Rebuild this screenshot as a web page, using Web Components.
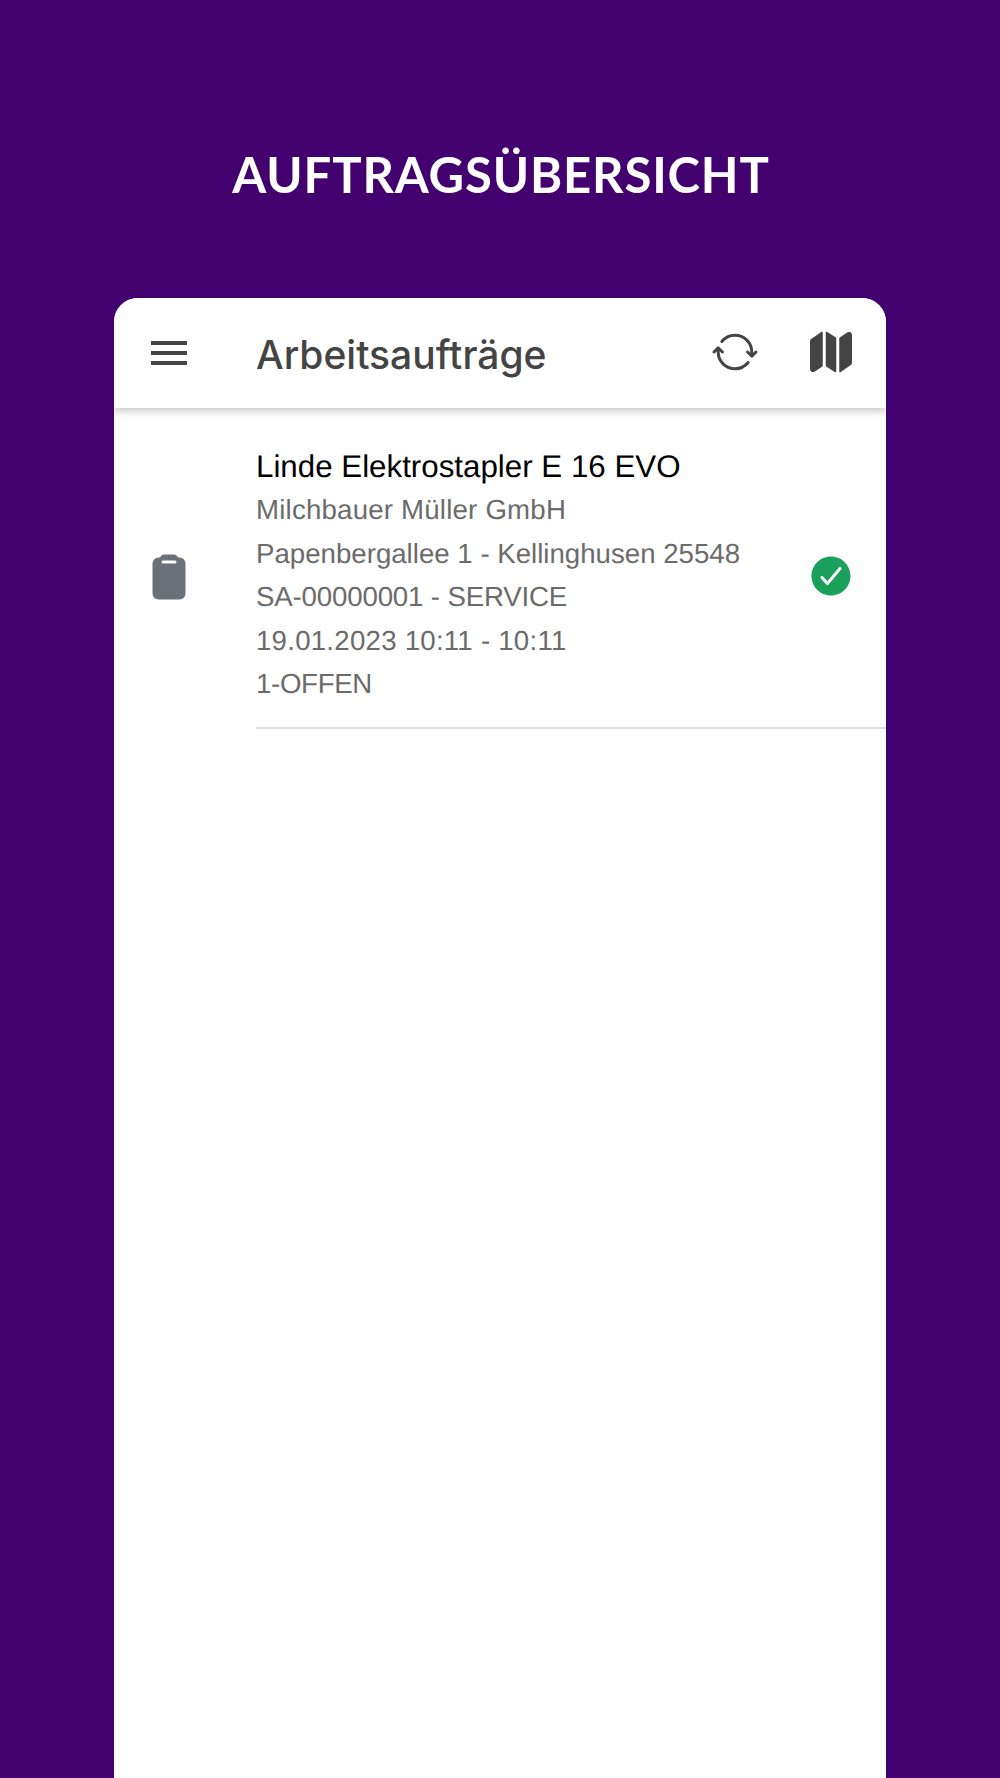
<!DOCTYPE html>
<html lang="de">
<head>
<meta charset="utf-8">
<title>Auftragsübersicht</title>
<style>
  html, body { margin: 0; height: 100%; background: #43006f; }
</style>
</head>
<body>
<order-screen heading="AUFTRAGSÜBERSICHT">
  <order-toolbar title="Arbeitsaufträge"></order-toolbar>
  <order-item
    title="Linde Elektrostapler E 16 EVO"
    lines="Milchbauer Müller GmbH|Papenbergallee 1 - Kellinghusen 25548|SA-00000001 - SERVICE|19.01.2023 10:11 - 10:11|1-OFFEN"
    tracking="0.2|0|-0.16|0.24|-0.32"></order-item>
</order-screen>

<script>
const ICONS = {
  menu: '<path d="M64 384h384v-42.67H64zm0-106.67h384v-42.66H64zM64 128v42.67h384V128z"/>',
  sync: '<g fill="none" stroke="currentColor" stroke-width="32" stroke-linecap="round" stroke-linejoin="round"><path d="M434.67 285.59v-29.8c0-98.73-80.24-178.79-179.2-178.79a179 179 0 00-140.14 67.36m-38.53 82v29.8C76.8 355 157 435 256 435a180.45 180.45 0 00140-66.92"/><path d="M32 256l44-44 46 44"/><path d="M480 256l-44 44-46-44"/></g>',
  map: '<path d="M48.17 113.34A32 32 0 0032 141.24V438a32 32 0 0047 28.37c.43-.23.85-.47 1.26-.74l84.14-55.05a8 8 0 003.63-6.72V46.24a8 8 0 00-12.51-6.63zM212.36 39.31A8 8 0 00200 46v357a8 8 0 003.64 6.72l96 62.11A8 8 0 00312 465V108a8 8 0 00-3.64-6.72zM464.53 46.47a31.64 31.64 0 00-31.5-.88 12.07 12.07 0 00-1.25.74l-84.15 55a8 8 0 00-3.63 6.72V465a8 8 0 0012.52 6.63l107.07-73.46a32 32 0 0016.41-28V74a32 32 0 00-15.47-27.53z"/>',
  clipboard: '<path d="M368 48h-11.41a8 8 0 01-7.44-5.08A42.18 42.18 0 00309.87 16H202.13a42.18 42.18 0 00-39.28 26.92 8 8 0 01-7.44 5.08H144a64 64 0 00-64 64v320a64 64 0 0064 64h224a64 64 0 0064-64V112a64 64 0 00-64-64zm-48.13 64H192.13a16 16 0 010-32h127.74a16 16 0 010 32z"/>',
  check: '<path d="M256 48C141.31 48 48 141.31 48 256s93.31 208 208 208 208-93.31 208-208S370.69 48 256 48zm108.25 138.29l-134.4 160a16 16 0 01-12 5.71h-.27a16 16 0 01-11.89-5.3l-57.6-64a16 16 0 1123.78-21.4l45.29 50.32 122.59-145.91a16 16 0 0124.5 20.58z"/>'
};

class AppIcon extends HTMLElement {
  connectedCallback() {
    this.attachShadow({ mode: 'open' });
    this.shadowRoot.innerHTML = `
      <style>
        :host { display: block; width: 48px; height: 48px; flex: none; }
        svg { display: block; width: 100%; height: 100%; fill: currentColor; }
      </style>
      <svg viewBox="0 0 512 512">${ICONS[this.getAttribute('name')]}</svg>
    `;
  }
}

class OrderScreen extends HTMLElement {
  connectedCallback() {
    this.attachShadow({ mode: 'open' });
    this.shadowRoot.innerHTML = `
      <style>
        :host {
          display: flex;
          flex-direction: column;
          height: 1778px;
          overflow: hidden;
          box-sizing: border-box;
          padding: 0 114px;
          background: #43006f;
        }
        h1 {
          margin: 0;
          height: 298px;
          box-sizing: border-box;
          padding: 145px 0 0 2px;
          font: 700 49px/58px Lato, sans-serif;
          letter-spacing: 0.85px;
          color: #fff;
          text-align: center;
          white-space: nowrap;
        }
        .card {
          flex: 1;
          background: #fff;
          border-radius: 24px 24px 0 0;
          overflow: hidden;
        }
      </style>
      <h1>${this.getAttribute('heading')}</h1>
      <div class="card"><slot></slot></div>
    `;
  }
}

class OrderToolbar extends HTMLElement {
  connectedCallback() {
    this.attachShadow({ mode: 'open' });
    this.shadowRoot.innerHTML = `
      <style>
        :host {
          display: flex;
          align-items: center;
          height: 110px;
          padding: 0 31px 0 31px;
          color: #444;
          background: #fff;
          box-shadow: 0 3px 8px rgba(0, 0, 0, 0.24);
          position: relative;
        }
        .title {
          flex: 1;
          margin-left: 63px;
          padding-top: 3px;
          font: 500 39px/48px Inter, "Liberation Sans", sans-serif;
          white-space: nowrap;
        }
        .actions { display: flex; gap: 48px; margin-bottom: 2px; }
      </style>
      <app-icon name="menu"></app-icon>
      <div class="title">${this.getAttribute('title')}</div>
      <div class="actions">
        <app-icon name="sync"></app-icon>
        <app-icon name="map"></app-icon>
      </div>
    `;
  }
}

class OrderItem extends HTMLElement {
  connectedCallback() {
    const lines = this.getAttribute('lines').split('|');
    const tracking = this.getAttribute('tracking').split('|');
    this.attachShadow({ mode: 'open' });
    this.shadowRoot.innerHTML = `
      <style>
        :host {
          display: flex;
          align-items: stretch;
          padding-left: 31px;
          font-family: "Liberation Sans", Arial, sans-serif;
          text-rendering: geometricPrecision;
        }
        .start { align-self: center; color: #6c7079; margin: 16px 63px 0 0; }
        .inner {
          flex: 1;
          display: flex;
          align-items: center;
          padding: 36.5px 31px 21.5px 0;
          border-bottom: 2px solid #dedede;
        }
        .text { flex: 1; }
        .title { font-size: 31.3px; line-height: 43.5px; color: #000; white-space: nowrap; }
        .line { font-size: 27.65px; line-height: 43.5px; color: #6b6b6b; white-space: nowrap; }
        .end { color: #1aa05a; margin-top: 2px; }
      </style>
      <app-icon class="start" name="clipboard"></app-icon>
      <div class="inner">
        <div class="text">
          <div class="title">${this.getAttribute('title')}</div>
          ${lines.map((l, i) => `<div class="line" style="letter-spacing:${tracking[i]}px">${l}</div>`).join('')}
        </div>
        <app-icon class="end" name="check"></app-icon>
      </div>
    `;
  }
}

customElements.define('app-icon', AppIcon);
customElements.define('order-screen', OrderScreen);
customElements.define('order-toolbar', OrderToolbar);
customElements.define('order-item', OrderItem);
</script>
</body>
</html>
